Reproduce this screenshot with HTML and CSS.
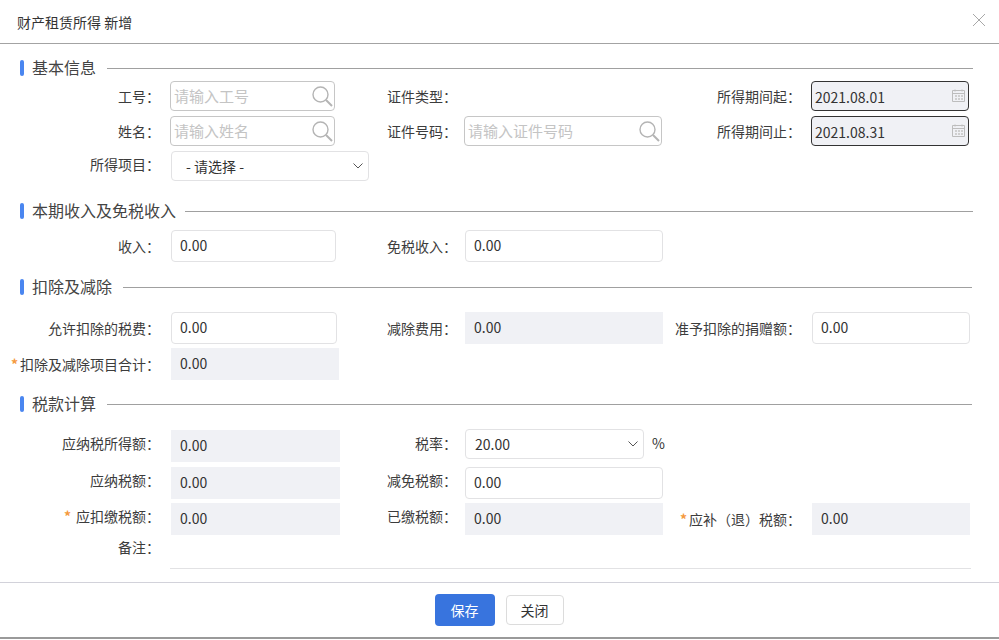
FILE: index.html
```html
<!DOCTYPE html>
<html lang="zh-CN">
<head>
    <meta charset="UTF-8">
    <title>财产租赁所得 新增</title>
    <link rel="stylesheet" href="styles.css">
</head>
<body>
    <svg class="icon-defs" width="0" height="0">
        <symbol id="i-search" viewBox="0 0 22 22">
            <circle cx="9.5" cy="9.5" r="7.5" fill="none" stroke="#b4b4b4" stroke-width="1.4"/>
            <path d="M15 15l6 6" stroke="#b4b4b4" stroke-width="2" fill="none"/>
        </symbol>
        <symbol id="i-date" viewBox="0 0 13 13">
            <path d="M.5 1.5h12v11H.5zM.5 4.5h12" fill="none" stroke="#bdbdbd"/>
            <path d="M3 .5v2M10 .5v2" stroke="#bdbdbd" fill="none"/>
            <path d="M3 6h2v2H3zM6 6h2v2H6zM9 6h2v2H9zM3 9h2v2H3zM6 9h2v2H6zM9 9h2v2H9z" fill="#cfcfcf"/>
        </symbol>
        <symbol id="i-down" viewBox="0 0 10 6">
            <path d="M.5.5L5 5 9.5.5" fill="none" stroke="#555"/>
        </symbol>
    </svg>

    <div class="dialog-head">
        <span class="dialog-title">财产租赁所得 新增</span>
        <svg class="close-btn" width="14" height="14" viewBox="0 0 14 14"><path d="M1 1l12 12M13 1L1 13" stroke="#a8a8a8" fill="none"/></svg>
    </div>

    <div class="dialog-body">
        <!-- 基本信息 -->
        <div class="sec-head sec-1"><i class="sec-bar"></i><span class="sec-title">基本信息</span><i class="sec-line"></i></div>
        <div class="row row-30 mt-5">
            <div class="lab">工号：</div>
            <div class="cell"><div class="ctl search w-165"><span class="ph">请输入工号</span><svg class="ico-search"><use href="#i-search"/></svg></div></div>
            <div class="lab lab-2">证件类型：</div>
            <div class="cell"></div>
            <div class="lab lab-3">所得期间起：</div>
            <div class="cell"><div class="ctl date">2021.08.01<svg class="ico-date"><use href="#i-date"/></svg></div></div>
        </div>
        <div class="row row-30 mt-5">
            <div class="lab">姓名：</div>
            <div class="cell"><div class="ctl search w-165"><span class="ph">请输入姓名</span><svg class="ico-search"><use href="#i-search"/></svg></div></div>
            <div class="lab lab-2">证件号码：</div>
            <div class="cell"><div class="ctl search w-198"><span class="ph">请输入证件号码</span><svg class="ico-search"><use href="#i-search"/></svg></div></div>
            <div class="lab lab-3">所得期间止：</div>
            <div class="cell"><div class="ctl date">2021.08.31<svg class="ico-date"><use href="#i-date"/></svg></div></div>
        </div>
        <div class="row row-30 mt-5">
            <div class="lab up-2">所得项目：</div>
            <div class="cell"><div class="ctl select sel-item">- 请选择 -<svg class="ico-down"><use href="#i-down"/></svg></div></div>
        </div>

        <!-- 本期收入及免税收入 -->
        <div class="sec-head sec-2"><i class="sec-bar"></i><span class="sec-title">本期收入及免税收入</span><i class="sec-line line-s"></i></div>
        <div class="row row-32 mt-11">
            <div class="lab">收入：</div>
            <div class="cell"><div class="ctl inp w-165">0.00</div></div>
            <div class="lab lab-2">免税收入：</div>
            <div class="cell"><div class="ctl inp w-198">0.00</div></div>
        </div>

        <!-- 扣除及减除 -->
        <div class="sec-head sec-3"><i class="sec-bar"></i><span class="sec-title">扣除及减除</span><i class="sec-line"></i></div>
        <div class="row row-32 mt-17">
            <div class="lab">允许扣除的税费：</div>
            <div class="cell"><div class="ctl inp w-166">0.00</div></div>
            <div class="lab lab-2">减除费用：</div>
            <div class="cell"><div class="ctl fill w-198">0.00</div></div>
            <div class="lab lab-3">准予扣除的捐赠额：</div>
            <div class="cell"><div class="ctl inp w-158 ml-1">0.00</div></div>
        </div>
        <div class="row row-32 mt-4">
            <div class="lab"><em class="req">*</em>扣除及减除项目合计：</div>
            <div class="cell"><div class="ctl fill w-168">0.00</div></div>
        </div>

        <!-- 税款计算 -->
        <div class="sec-head sec-4"><i class="sec-bar"></i><span class="sec-title">税款计算</span><i class="sec-line"></i></div>
        <div class="row row-32 mt-18">
            <div class="lab up-3">应纳税所得额：</div>
            <div class="cell"><div class="ctl fill w-169">0.00</div></div>
            <div class="lab lab-2 up-3">税率：</div>
            <div class="cell rate-cell"><div class="ctl select sel-rate">20.00<svg class="ico-down"><use href="#i-down"/></svg></div><span class="unit">%</span></div>
        </div>
        <div class="row row-32 mt-5">
            <div class="lab up-3">应纳税额：</div>
            <div class="cell"><div class="ctl fill w-169">0.00</div></div>
            <div class="lab lab-2 up-3">减免税额：</div>
            <div class="cell"><div class="ctl inp w-198">0.00</div></div>
        </div>
        <div class="row row-32 mt-4">
            <div class="lab up-3"><em class="req req-gap">*</em>应扣缴税额：</div>
            <div class="cell"><div class="ctl fill w-169">0.00</div></div>
            <div class="lab lab-2 up-3">已缴税额：</div>
            <div class="cell"><div class="ctl fill w-198">0.00</div></div>
            <div class="lab lab-3"><em class="req">*</em>应补（退）税额：</div>
            <div class="cell"><div class="ctl fill w-158 ml-1">0.00</div></div>
        </div>
        <div class="row row-remark">
            <div class="lab up-5">备注：</div>
            <div class="remark"></div>
        </div>
    </div>

    <div class="dialog-foot">
        <button class="btn btn-primary">保存</button>
        <button class="btn">关闭</button>
    </div>
</body>
</html>
```

FILE: styles.css
```css
* {
    box-sizing: border-box;
}

html, body {
    height: 100%;
}

body {
    margin: 0;
    overflow: hidden;
    background: #fff;
    color: #333;
    font-family: "Noto Sans CJK SC", "Noto Sans", sans-serif;
    font-size: 14px;
}

.icon-defs {
    position: absolute;
}

/* 弹窗头部 */
.dialog-head {
    display: flex;
    justify-content: space-between;
    align-items: center;
    height: 44px;
    padding: 0 13px 1px 17px;
    border-bottom: 1px solid #a3a3a3;
}

.dialog-title {
    margin-top: 2px;
    font-size: 14px;
    line-height: 20px;
}

.close-btn {
    display: block;
    margin-top: -2px;
}

/* 分组标题 */
.sec-head {
    display: flex;
    align-items: center;
    height: 16px;
    padding: 0 26px 0 20px;
}

.sec-1 { margin-top: 16px; }
.sec-2 { margin-top: 22px; }
.sec-3 { margin-top: 17px; padding-right: 27px; }
.sec-4 { margin-top: 16px; padding-right: 27px; }

.sec-bar {
    width: 4px;
    height: 16px;
    border-radius: 2px;
    background: #4a86f0;
}

.sec-title {
    margin: -2px 0 0 8px;
    font-size: 16px;
    line-height: 16px;
    color: #444;
}

.sec-line {
    flex: 1;
    height: 1px;
    margin-left: 11px;
    background: #a0a0a0;
}

.line-s {
    margin-left: 9px;
}

/* 表单行 */
.row {
    display: grid;
    grid-template-columns: 171px 214px 80px 206px 140px 159px;
    align-items: center;
}

.row-30 { grid-template-rows: 30px; }
.row-32 { grid-template-rows: 32px; }
.row-remark { grid-template-rows: 34px; }

.mt-4 { margin-top: 4px; }
.mt-5 { margin-top: 5px; }
.mt-11 { margin-top: 11px; }
.mt-17 { margin-top: 17px; }
.mt-18 { margin-top: 18px; }

.ml-1 { margin-left: 1px; }

.lab {
    padding-right: 11px;
    text-align: right;
    white-space: nowrap;
    line-height: 20px;
    color: #3c3c3c;
}

.lab-2 {
    padding-right: 8px;
}

.lab-3 {
    padding-right: 10px;
}

.up-2 { margin-top: -4px; }
.up-3 { margin-top: -6px; }
.up-5 { margin-top: -10px; }

.req {
    margin-right: 2px;
    font-style: normal;
    font-weight: 700;
    color: #f59a3e;
}

.req-gap {
    margin-right: 5px;
}

/* 控件 */
.ctl {
    position: relative;
    height: 100%;
    line-height: 29px;
    border-radius: 4px;
    white-space: nowrap;
}

.cell {
    height: 100%;
}

.inp, .select {
    padding-left: 8px;
    background: #fff;
    border: 1px solid #e2e2e4;
}

.fill {
    padding-left: 9px;
    line-height: 30px;
    border-radius: 0;
    background: #f0f1f5;
}

.search {
    margin-left: -1px;
    padding-left: 3px;
    line-height: 28px;
    border: 1px solid #c6c6c6;
    font-size: 15px;
}

.ph {
    color: #c4c4c4;
}

.date {
    width: 158px;
    padding-left: 3px;
    line-height: 30px;
    border: 1px solid #333;
    background: #f0f1f5;
}

.w-165 { width: 165px; }
.w-166 { width: 166px; }
.w-168 { width: 168px; }
.w-169 { width: 169px; }
.w-198 { width: 198px; }
.w-158 { width: 158px; }

.sel-item {
    width: 198px;
    padding-left: 14px;
}

.sel-rate {
    width: 179px;
    height: 30px;
    margin-top: -1px;
    padding-left: 9px;
}

.rate-cell {
    display: flex;
}

.unit {
    margin: -1px 0 0 8px;
    line-height: 28px;
}

.ico-search {
    position: absolute;
    top: 3px;
    right: 1px;
    width: 22px;
    height: 22px;
}

.ico-date {
    position: absolute;
    top: 7px;
    right: 3px;
    width: 13px;
    height: 13px;
}

.ico-down {
    position: absolute;
    top: 11px;
    right: 5px;
    width: 10px;
    height: 6px;
}

.remark {
    grid-column: 2 / 7;
    height: 100%;
    margin-left: -1px;
    margin-right: -1px;
    border-bottom: 1px solid #e2e2e4;
}

/* 底部按钮 */
.dialog-foot {
    display: flex;
    justify-content: center;
    align-items: center;
    gap: 11px;
    height: 57px;
    margin-top: 13px;
    padding-right: 1px;
    border-top: 1px solid #d2d2da;
    border-bottom: 2px solid #9a9a9a;
}

.btn {
    width: 58px;
    height: 30px;
    padding: 0;
    border: 1px solid #dcdcdc;
    border-radius: 4px;
    background: #fff;
    color: #333;
    font-family: inherit;
    font-size: 14px;
}

.btn-primary {
    width: 60px;
    height: 32px;
    border: none;
    background: #3874de;
    color: #fff;
}
```
